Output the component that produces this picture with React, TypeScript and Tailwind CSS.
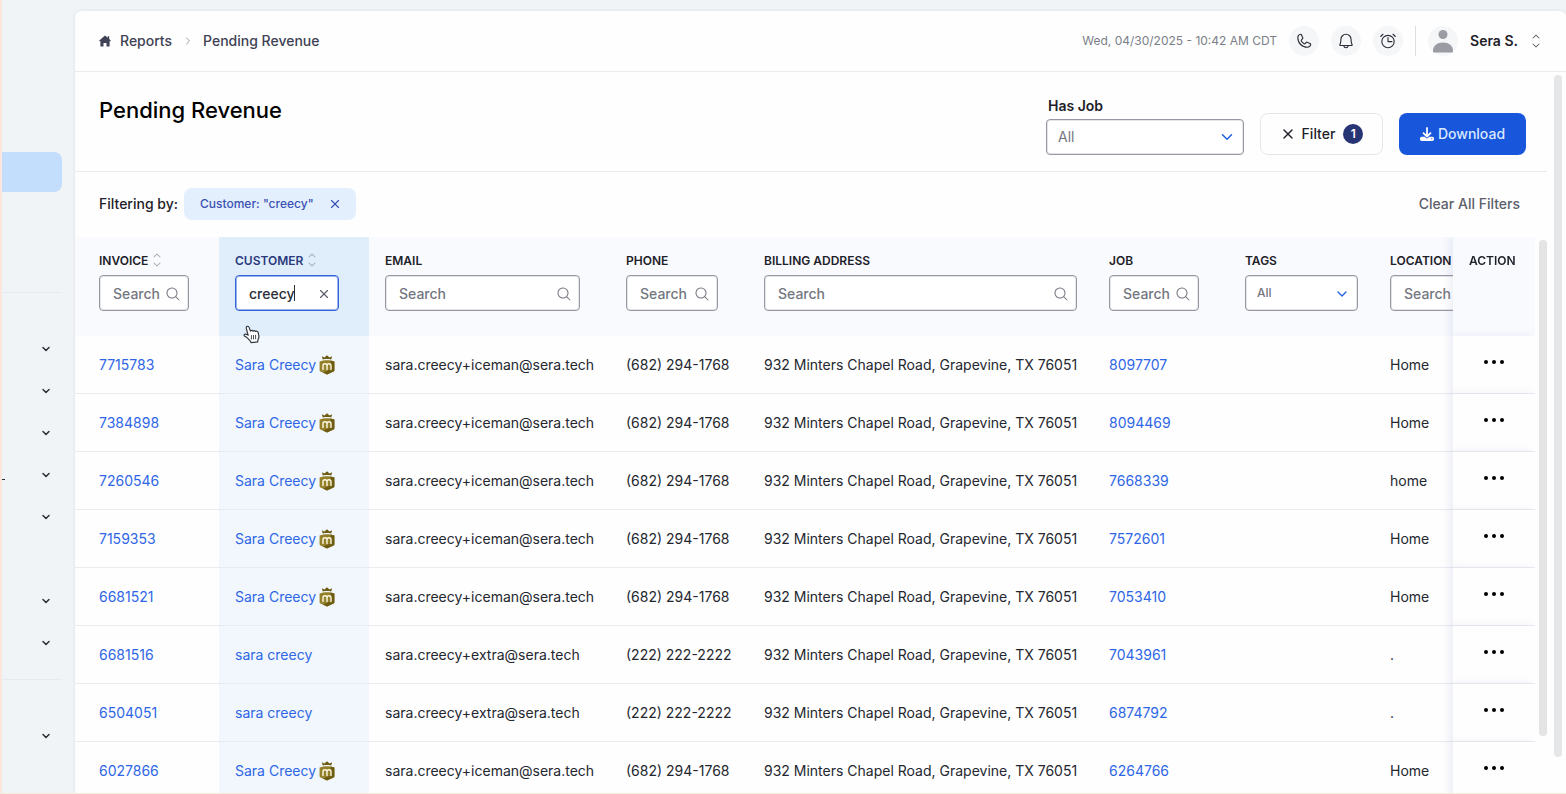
import React from 'react';
import { LuX, LuChevronDown, LuChevronRight } from 'react-icons/lu';
import { PiAlarm, PiBell, PiCaretUpDown, PiMagnifyingGlass, PiPhone } from 'react-icons/pi';
import { FaDownload } from 'react-icons/fa6';

type Row = {
  invoice: string;
  customer: string;
  member: boolean;
  email: string;
  phone: string;
  job: string;
  location: string;
};

const iceman = { customer: 'Sara Creecy', member: true, email: 'sara.creecy+iceman@sera.tech', phone: '(682) 294-1768' };
const extra = { customer: 'sara creecy', member: false, email: 'sara.creecy+extra@sera.tech', phone: '(222) 222-2222' };
const address = '932 Minters Chapel Road, Grapevine, TX 76051';

const rows: Row[] = [
  { invoice: '7715783', job: '8097707', location: 'Home', ...iceman },
  { invoice: '7384898', job: '8094469', location: 'Home', ...iceman },
  { invoice: '7260546', job: '7668339', location: 'home', ...iceman },
  { invoice: '7159353', job: '7572601', location: 'Home', ...iceman },
  { invoice: '6681521', job: '7053410', location: 'Home', ...iceman },
  { invoice: '6681516', job: '7043961', location: '.', ...extra },
  { invoice: '6504051', job: '6874792', location: '.', ...extra },
  { invoice: '6027866', job: '6264766', location: 'Home', ...iceman },
];

const HomeIcon = () => (
  <svg viewBox="0 0 12 12" className="size-3 fill-[#3f4254]" aria-hidden="true">
    <path d="M6 .4 .3 5.5c-.3.3-.1.8.3.8h.8v4.6c0 .4.3.7.7.7h2.4V8h3v3.6h2.4c.4 0 .7-.3.7-.7V6.3h.8c.4 0 .6-.5.3-.8L10.2 4V1.200H8.800v1.500z" />
  </svg>
);

const MemberBadge = () => (
  <svg viewBox="0 0 16 20" className="h-5 w-4" role="img" aria-label="Member">
    <path d="M3.800 4.400 2.800 1.300l2.700 1.300L8 .3l2.500 2.300 2.700-1.300-1 3.100C9.500 3.800 6.500 3.800 3.800 4.400z" fill="#6d5c12" />
    <path d="M.6 6.600C3 5.600 5.400 5.200 8 5.200s5 .4 7.400 1.400v8.600c0 .6-.3 1-.8 1.300L8 19.400l-6.600-2.900c-.5-.3-.8-.7-.8-1.300z" fill="#94802a" />
    <path d="M11.500 5.500c1.400.2 2.700.6 3.900 1.100v8.600c0 .6-.3 1-.8 1.300L8 19.400l-4-1.800 7.500-3z" fill="#6d5c12" />
    <path d="M4 14.500V10.800c0-1.200.8-2 2-2s2 .8 2 2c0-1.200.8-2 2-2s2 .8 2 2v3.700M8 10.800v3.700" fill="none" stroke="#fffbe6" strokeWidth="1.400" strokeLinecap="round" />
  </svg>
);

const HandCursor = () => (
  <svg viewBox="0 0 18 20" className="pointer-events-none absolute top-[87px] left-6 h-5 w-[18px]" aria-hidden="true">
    <path
      d="M5.200 11.300 3.300 4.500c-.3-1.200.2-2 1-2.200.9-.2 1.600.3 1.900 1.300l1.200 3.500c.2-1 2.100-1.100 2.600.1.500-.9 2-.8 2.500.3.700-.7 2.200-.3 2.600 1 .4 1.500.9 3 .8 4.600-.1 1.300-.9 2-1.100 3.200l-.1 1.600-6.700.7c-.4-1.700-1.700-2.500-2.700-3.700C4.200 13.700 2.500 12.800 1.500 12c-1-.9.1-2.200 1.300-1.900.9.2 1.600.8 2.400 1.200z"
      fill="#fff"
      stroke="#33373f"
      strokeWidth="1.200"
      strokeLinejoin="round"
    />
    <path d="M8.400 11.500v3.600M10.500 11.400v3.600M12.600 11.200v3.600" stroke="#33373f" strokeWidth=".9" strokeLinecap="round" />
  </svg>
);

const Title = ({ id, children, sort, active }: { id: string; children: string; sort?: boolean; active?: boolean }) => (
  <div className={`flex h-4 items-center gap-px text-xs font-semibold ${active ? 'text-[#2b3a7d]' : 'text-[#1e2129]'}`}>
    <label htmlFor={id}>{children}</label>
    {sort && <PiCaretUpDown className="mb-[2px] size-4 text-[#a6a9b2]" aria-hidden="true" />}
  </div>
);

const SearchBox = ({ id }: { id: string }) => (
  <div className="relative mt-[6px]">
    <input
      id={id}
      type="text"
      placeholder="Search"
      className="h-9 w-full rounded border border-[#9699a2] bg-white pl-[13px] text-sm font-medium ring-1 ring-[#9699a2]/25 ring-inset placeholder:text-[#74777f]"
    />
    <PiMagnifyingGlass className="absolute top-[11px] right-2 size-4 text-[#74777f]" aria-hidden="true" />
  </div>
);

const IconButton = ({ label, children }: { label: string; children: React.ReactNode }) => (
  <button type="button" aria-label={label} className="flex size-[30px] items-center justify-center rounded-full bg-[#f5f6f8] text-[#2c2f38]">
    {children}
  </button>
);

const Chevron = () => (
  <button type="button" aria-label="Expand section" className="flex h-[42px] items-center justify-end pr-[10px] text-[#2c2f38]">
    <LuChevronDown className="size-3" strokeWidth={3} />
  </button>
);

const Sidebar = () => (
  <aside className="flex w-[75px] shrink-0 flex-col border-l-2 border-[#fae6dc] pr-[13px] pt-[152px]">
    <div className="h-10 rounded-r-lg bg-[#c3ddfc]" />
    <div className="mt-[100px] mb-[35px] border-t border-[#e6eaef]" />
    <nav className="flex flex-col">
      <Chevron />
      <Chevron />
      <Chevron />
      <div className="flex items-center justify-between">
        <span className="mt-2 h-px w-[3px] bg-[#2c2f38]" />
        <Chevron />
      </div>
      <Chevron />
      <div className="h-[42px]" />
      <Chevron />
      <Chevron />
      <div className="mt-[15px] mb-[35px] border-t border-[#e6eaef]" />
      <Chevron />
    </nav>
  </aside>
);

const TopBar = () => (
  <header className="flex h-[61px] items-center justify-between border-b border-[#e9ebef] pr-[22px] pl-6">
    <nav className="flex items-center text-sm font-medium text-[#3f4254]">
      <HomeIcon />
      <a href="#reports" className="ml-[9px]">Reports</a>
      <LuChevronRight className="mr-[9px] ml-[10px] size-3 text-[#9a9ea8]" />
      <a href="#pending">Pending Revenue</a>
    </nav>
    <div className="flex items-center gap-3">
      <span className="text-xs text-[#7b7e87]">Wed, 04/30/2025 - 10:42 AM CDT</span>
      <IconButton label="Calls"><PiPhone className="size-[18px]" /></IconButton>
      <IconButton label="Notifications"><PiBell className="size-[18px]" /></IconButton>
      <IconButton label="Alarms"><PiAlarm className="size-[18px]" /></IconButton>
      <div className="h-[30px] border-l border-[#dcdee3]" />
      <button type="button" className="flex items-center text-sm font-semibold text-[#1e2129]">
        <svg viewBox="0 0 30 30" className="mr-3 size-[30px]" aria-hidden="true">
          <circle cx="15" cy="15" r="15" fill="#f5f6f8" />
          <circle cx="15" cy="8.500" r="4.500" fill="#9a9ba3" />
          <path d="M5 25c0-5.500 4.200-8.500 10-8.500s10 3 10 8.500c0 1-.5 1.500-1.300 1.500H6.300C5.500 26.500 5 26 5 25z" fill="#9a9ba3" />
        </svg>
        Sera S.
        <PiCaretUpDown className="ml-[10px] size-4 text-[#5c606b]" />
      </button>
    </div>
  </header>
);

const Toolbar = () => (
  <div className="flex h-[100px] items-start justify-between border-b border-[#e9ebef] pr-[21px] pl-6">
    <h1 className="mt-[22px] text-[22px] leading-8 font-medium text-black">Pending Revenue</h1>
    <div className="flex items-end gap-4 pt-6">
      <div className="w-[198px]">
        <label htmlFor="has-job" className="block pl-[2px] text-sm font-semibold text-[#1e2129]">Has Job</label>
        <div className="relative mt-[3px]">
          <select id="has-job" className="h-9 w-full appearance-none rounded border border-[#9699a2] bg-white pl-[11px] text-sm text-[#74777f] ring-1 ring-[#9699a2]/25 ring-inset">
            <option>All</option>
          </select>
          <LuChevronDown className="pointer-events-none absolute top-[9px] right-2 size-[18px] text-[#2560e0]" />
        </div>
      </div>
      <button type="button" className="flex h-[42px] w-[123px] items-center justify-center gap-[6px] rounded-lg border border-[#e6e7ec] text-sm font-medium text-[#1e2129]">
        <LuX className="size-4" />
        Filter
        <span className="ml-[2px] flex size-5 items-center justify-center rounded-full bg-[#283575] text-xs font-semibold text-white">1</span>
      </button>
      <button type="button" className="flex h-[42px] w-[127px] items-center justify-center gap-1 rounded-lg bg-[#1857dc] text-sm font-medium text-[#dbe8ff]">
        <FaDownload className="size-[14px] text-white" />
        Download
      </button>
    </div>
  </div>
);

const FilterRow = () => (
  <div className="flex h-[65px] items-center justify-between pr-[27px] pb-[2px] pl-6">
    <div className="flex items-center gap-[6px] text-sm font-medium text-[#1e2129]">
      Filtering by:
      <span className="flex h-8 items-center gap-[14px] rounded-lg bg-[#e3effc] pr-[14px] pl-4 text-xs text-[#3b52b4]">
        Customer: "creecy"
        <button type="button" aria-label="Remove filter"><LuX className="size-[14px]" /></button>
      </span>
    </div>
    <button type="button" className="text-sm font-medium text-[#5c606b]">Clear All Filters</button>
  </div>
);

const RevenueTable = () => (
  <div className="min-w-0 flex-1 overflow-hidden">
    <table className="w-full min-w-[1520px] table-fixed border-separate border-spacing-0 text-left">
      <colgroup>
        <col className="w-[144px]" />
        <col className="w-[150px]" />
        <col className="w-[241px]" />
        <col className="w-[138px]" />
        <col className="w-[345px]" />
        <col className="w-[136px]" />
        <col className="w-[145px]" />
        <col />
        <col className="w-[82px]" />
      </colgroup>
      <thead>
        <tr className="h-[99px] bg-[#f8fafd] align-top">
          <th className="pt-4 pr-[30px] pl-6 font-normal">
            <Title id="invoice" sort>INVOICE</Title>
            <SearchBox id="invoice" />
          </th>
          <th className="relative bg-[#e0eefb] pt-4 pr-[30px] pl-4 font-normal">
            <Title id="customer" sort active>CUSTOMER</Title>
            <div className="relative mt-[6px]">
              <input
                id="customer"
                type="text"
                defaultValue="creecy"
                className="h-9 w-full rounded border border-[#3565d8] bg-white pl-[13px] text-sm font-medium text-[#2c2f38] ring-1 ring-[#3565d8]/50 ring-inset"
              />
              <span className="absolute top-[10px] left-[59px] h-4 border-l border-[#2c2f38]" />
              <button type="button" aria-label="Clear" className="absolute top-3 right-2">
                <LuX className="size-[14px] text-[#5c606b]" />
              </button>
            </div>
            <HandCursor />
          </th>
          <th className="pt-4 pr-[30px] pl-4 font-normal">
            <Title id="email">EMAIL</Title>
            <SearchBox id="email" />
          </th>
          <th className="pt-4 pr-[30px] pl-4 font-normal">
            <Title id="phone">PHONE</Title>
            <SearchBox id="phone" />
          </th>
          <th className="px-4 pt-4 font-normal">
            <Title id="billing">BILLING ADDRESS</Title>
            <SearchBox id="billing" />
          </th>
          <th className="pt-4 pr-[30px] pl-4 font-normal">
            <Title id="job">JOB</Title>
            <SearchBox id="job" />
          </th>
          <th className="px-4 pt-4 font-normal">
            <Title id="tags">TAGS</Title>
            <div className="relative mt-[6px]">
              <select id="tags" className="h-9 w-full appearance-none rounded border border-[#9699a2] bg-white pl-[11px] text-xs font-medium text-[#74777f] ring-1 ring-[#9699a2]/25 ring-inset">
                <option>All</option>
              </select>
              <LuChevronDown className="pointer-events-none absolute top-[11px] right-2 size-4 text-[#2560e0]" />
            </div>
          </th>
          <th className="pt-4 pr-[30px] pl-4 font-normal">
            <Title id="location">LOCATION</Title>
            <SearchBox id="location" />
          </th>
          <th className="sticky right-0 z-10 bg-[#f8fafd] pt-4 pl-4 text-xs font-semibold text-[#1e2129] shadow-[-4px_0_8px_rgba(90,100,180,0.1)]">
            ACTION
          </th>
        </tr>
      </thead>
      <tbody className="text-sm text-[#24272f]">
        {rows.map((row) => (
          <tr key={row.invoice} className="h-[58px] *:border-b *:border-[#e9ebf1] *:whitespace-nowrap">
            <td className="pl-6"><a href="#invoice" className="text-[#2f66e6]">{row.invoice}</a></td>
            <td className="bg-[#f1f7fc] pl-4">
              <a href="#customer" className="flex items-center gap-[3px] text-[#2f66e6]">
                {row.customer}
                {row.member && <MemberBadge />}
              </a>
            </td>
            <td className="pl-4">{row.email}</td>
            <td className="pl-4">{row.phone}</td>
            <td className="pl-4">{address}</td>
            <td className="pl-4"><a href="#job" className="text-[#2f66e6]">{row.job}</a></td>
            <td />
            <td className="pl-4">{row.location}</td>
            <td className="sticky right-0 z-10 bg-[#fefefe] shadow-[-4px_0_8px_rgba(90,100,180,0.1)]">
              <button type="button" aria-label="Row actions" className="mb-[5px] flex w-full justify-center gap-1">
                <span className="size-1 rounded-full bg-black" />
                <span className="size-1 rounded-full bg-black" />
                <span className="size-1 rounded-full bg-black" />
              </button>
            </td>
          </tr>
        ))}
      </tbody>
    </table>
  </div>
);

export default function App() {
  return (
    <div className="flex h-screen overflow-hidden border-b border-[#f5ecd8] bg-[#f1f4f6] font-['Inter',sans-serif]">
      <Sidebar />
      <main className="mt-[11px] flex min-w-0 flex-1 flex-col overflow-hidden rounded-t-md bg-[#fefefe] shadow-[0_0_3px_rgba(120,130,160,0.2)]">
        <TopBar />
        <div className="flex min-h-0 flex-1">
          <div className="min-w-0 flex-1">
            <Toolbar />
            <FilterRow />
            <div className="flex gap-1">
              <RevenueTable />
              <div className="mt-[3px] h-[496px] w-2 rounded-full bg-[#e4e4e5]" />
            </div>
          </div>
          <div className="mt-[3px] mr-1 ml-[7px] h-[682px] w-2 rounded-full bg-[#e4e6e8]" />
        </div>
      </main>
    </div>
  );
}
